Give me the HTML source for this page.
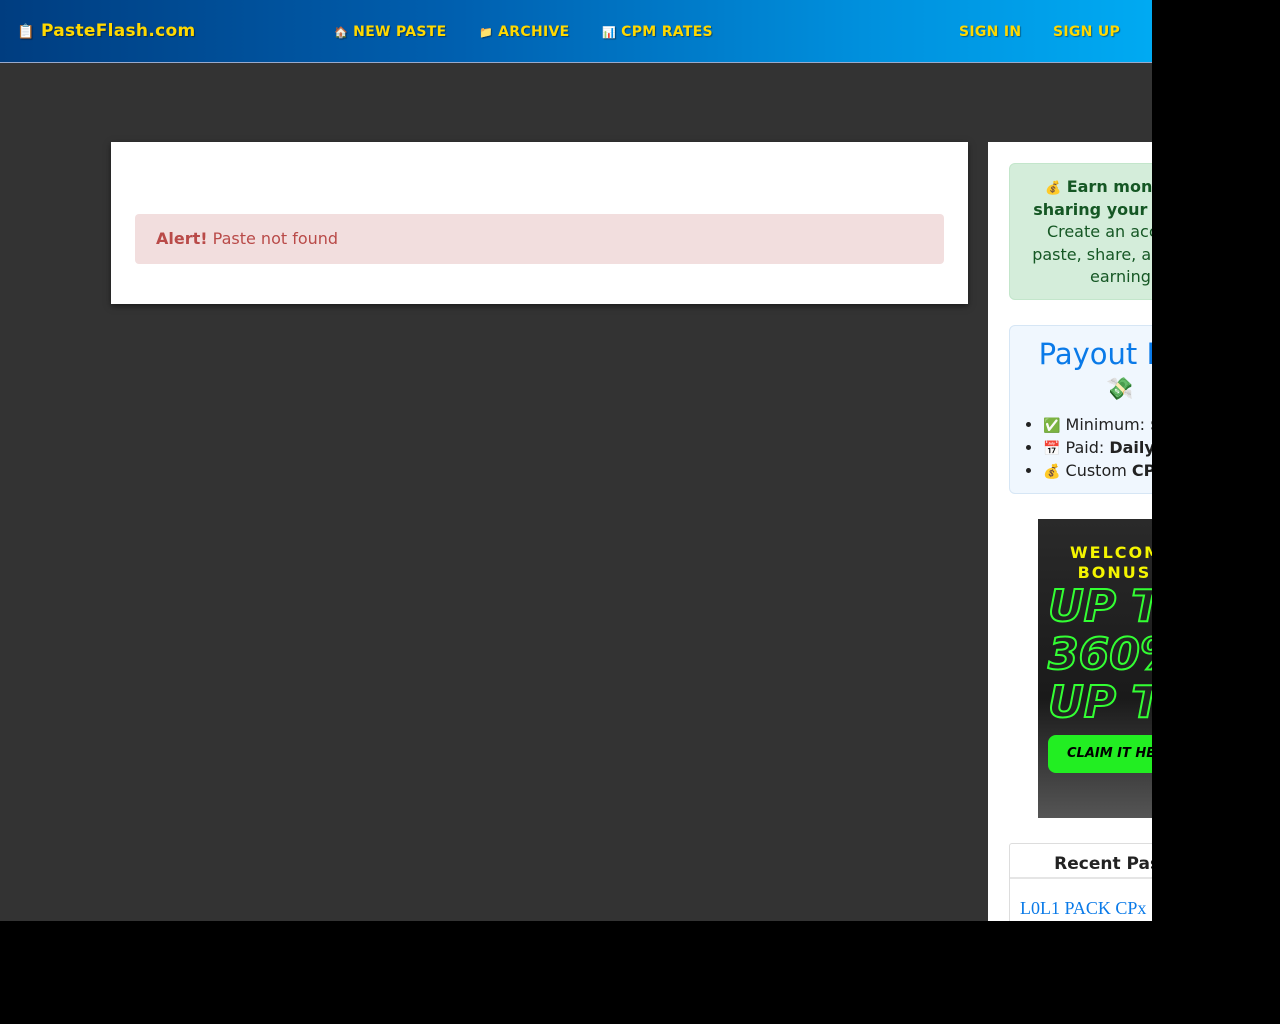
<!DOCTYPE html>
<html><head><meta charset="utf-8"><style>
html,body{margin:0;padding:0;background:#000;width:1280px;height:1024px;overflow:hidden;font-family:"DejaVu Sans","Liberation Sans",sans-serif}
#vp{position:absolute;left:0;top:0;width:1152px;height:921px;overflow:hidden;background:#333}
#hdr{position:absolute;left:0;top:0;width:1152px;height:62px;background:linear-gradient(90deg,#003d80 0%,#0060b0 40%,#0090dd 75%,#00aaf2 100%);border-bottom:1px solid #9ac;}
.nav{position:absolute;top:24px;color:#ffd800;font-weight:bold;font-size:14px;letter-spacing:.3px;text-shadow:1px 1px 1px rgba(0,0,0,.4);white-space:nowrap}
.e{font-size:11px}
.z{line-height:0}
#main{position:absolute;left:111px;top:142px;width:857px;height:162px;background:#fff;box-shadow:0 2px 6px rgba(0,0,0,.5)}
#alert{position:absolute;left:24px;top:72px;width:809px;height:50px;background:#f2dede;border-radius:4px;color:#b94a48;font-size:16px;line-height:50px;box-sizing:border-box;padding-left:21px}
#side{position:absolute;left:988px;top:142px;width:330px;height:800px;background:#fff}
.box{position:absolute;left:21px;width:294px;border-radius:6px;box-sizing:border-box}
#green{top:21px;height:137px;background:#d4edda;border:1px solid #c3e6cb;color:#155724;font-size:16px;text-align:center;line-height:22.5px;padding-top:12px;padding-right:66px}
#pay{top:183px;height:169px;background:#f0f7fe;border:1px solid #d6e6f5;color:#222;font-size:16px}
#pay li{height:23px;line-height:23px}
#ad{position:absolute;left:50px;top:377px;width:200px;height:299px;background:linear-gradient(#2a2a2a,#1a1a1a 60%,#555);overflow:hidden}
#recent{top:701px;height:120px;border:1px solid #ddd;border-radius:3px}
</style></head><body><div id="vp">
<div id="hdr">
<div class="nav" style="left:17px;top:21px;font-size:17px"><span style="font-size:14px">📋</span> PasteFlash.com</div>
<div class="nav" style="left:334px"><span class="e">🏠</span> NEW PASTE</div>
<div class="nav" style="left:479px"><span class="e">📁</span> ARCHIVE</div>
<div class="nav" style="left:602px"><span class="e">📊</span> CPM RATES</div>
<div class="nav" style="left:959px">SIGN IN</div>
<div class="nav" style="left:1053px">SIGN UP</div>
</div>
<div id="main"><div id="alert"><b>Alert!</b> Paste not found</div></div>
<div id="side">
<div class="box" id="green"><div style="white-space:nowrap;font-weight:bold;"><span class="z" style="font-size:13px">💰</span> Earn money by<br>sharing your pastes</div><div style="white-space:nowrap">Create an account,<br>paste, share, and start<br>earning.</div></div>
<div class="box" id="pay"><div style="color:#0a7ae8;font-size:29px;text-align:center;margin-top:11px;white-space:nowrap;padding-right:72px">Payout Info</div><div style="text-align:center;font-size:22px;margin-top:6px;padding-right:72px;height:28px">💸</div>
<ul style="margin:8px 0 0;padding-left:33px;white-space:nowrap"><li><span class="z" style="font-size:14px">✅</span> Minimum: <b>$5</b></li><li><span class="z" style="font-size:14px">📅</span> Paid: <b>Daily</b></li><li><span class="z" style="font-size:14px">💰</span> Custom <b>CPM</b></li></ul></div>
<div id="ad"><div style="color:#f5f500;font-weight:bold;font-size:16px;letter-spacing:2px;margin:24px 0 0 32px;line-height:20px;white-space:nowrap">WELCOME<br>&nbsp;BONUS</div>
<div style="color:#222;-webkit-text-stroke:2px #3f3;font-style:italic;font-weight:bold;font-size:44px;line-height:48px;margin-left:10px;white-space:nowrap">UP TO<br>360%<br>UP TO</div>
<div style="position:absolute;left:10px;top:216px;width:200px;height:38px;background:#2e2;border-radius:8px;font-style:italic;font-weight:bold;font-size:13px;line-height:38px;padding-left:19px;white-space:nowrap">CLAIM IT HERE</div></div>
<div class="box" id="recent"><div style="text-align:center;font-weight:bold;font-size:17px;padding:10px 68px 3px 0;border-bottom:2px solid #e5e5e5;white-space:nowrap;color:#222">Recent Pastes</div><div style="font-family:'Liberation Serif',serif;color:#0a7ae8;font-size:18px;padding:19px 10px;white-space:nowrap">L0L1 PACK CPx</div></div>
</div>
</div></body></html>
